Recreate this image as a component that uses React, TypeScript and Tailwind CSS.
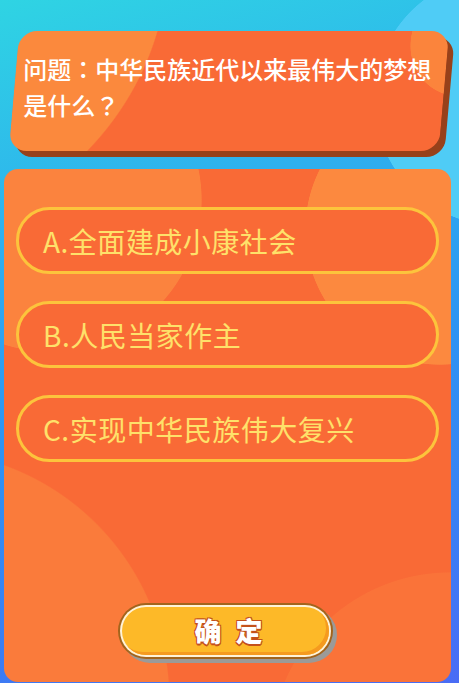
const options = ["A.全面建成小康社会", "B.人民当家作主", "C.实现中华民族伟大复兴"];

const punct = { fontFamily: '"Noto Sans CJK TC", "Noto Sans CJK SC", sans-serif' };

export default function App() {
  return (
    <div
      className="w-[459px] h-[683px] overflow-hidden pt-[31px] [text-spacing-trim:space-all] [background-image:radial-gradient(circle_126px_at_500px_100px,#4fccf6_99.5%,transparent_100%),linear-gradient(165deg,#2fd4e3_0%,#2eb0ee_30%,#2e94f2_55%,#3a7ff3_80%,#4a6cf5_100%)]"
      style={{ fontFamily: '"Noto Sans CJK SC", "Noto Sans", sans-serif' }}
    >
      {/* question card */}
      <div className="ml-[14px] w-[430px] h-[120px] -skew-x-[5deg] rounded-[18px] shadow-[6px_6px_0_#97411a] bg-[#f96a36] [background-image:radial-gradient(circle_258px_at_-114px_-51px,#fb893d_99.5%,transparent_100%),radial-gradient(circle_56px_at_448px_10px,#fb843c_99%,transparent_100%)]">
        <div className="skew-x-[5deg] pl-[8px] pr-2 pt-[20px] text-[24px] leading-[36px] text-white font-medium">
          问题<span style={punct}>：</span>中华民族近代以来最伟大的梦想是什么<span style={punct}>？</span>
        </div>
      </div>

      {/* answer panel */}
      <div className="mt-[18px] ml-[4px] w-[447px] h-[513px] rounded-[14px] bg-[#f96a36] [background-image:radial-gradient(circle_152px_at_46px_31px,#fb833e_99.5%,transparent_100%),radial-gradient(circle_135px_at_436px_61px,#fc893f_99.5%,transparent_100%),radial-gradient(circle_250px_at_-84px_531px,#fa7b3b_99.5%,transparent_100%),radial-gradient(circle_180px_at_446px_583px,#fa7339_99.5%,transparent_100%)] flex flex-col">
        <div className="flex flex-col px-3 pt-[38px] gap-[27px]">
          {options.map((o) => (
            <div
              key={o}
              className="h-[67px] rounded-full border-[3px] border-[#fcc43c] bg-[#f96a36] flex items-center pl-[24px] text-[28px] tracking-[0.5px] text-[#fee16a]"
            >
              {o}
            </div>
          ))}
        </div>

        {/* confirm button */}
        <div className="mt-[141px] ml-[114px] w-[215px] h-[56px] rounded-full bg-[#a3641c] p-[2px] shadow-[4px_4px_0_#9b9a98]">
          <div className="w-full h-full rounded-full bg-[#fff3d8] p-[2px]">
            <div className="w-full h-full rounded-full bg-[#fdb928] shadow-[inset_-3px_-3px_0_#f59a1f] flex items-center justify-center">
              <span className="text-[27px] font-black text-white tracking-[14px] pl-[20px] [text-shadow:0_2px_0_#c4511b,1px_1px_0_#c4511b,-1px_1px_0_#c4511b,1px_-1px_0_#c4511b,-1px_-1px_0_#c4511b]">
                确定
              </span>
            </div>
          </div>
        </div>
      </div>
    </div>
  );
}
